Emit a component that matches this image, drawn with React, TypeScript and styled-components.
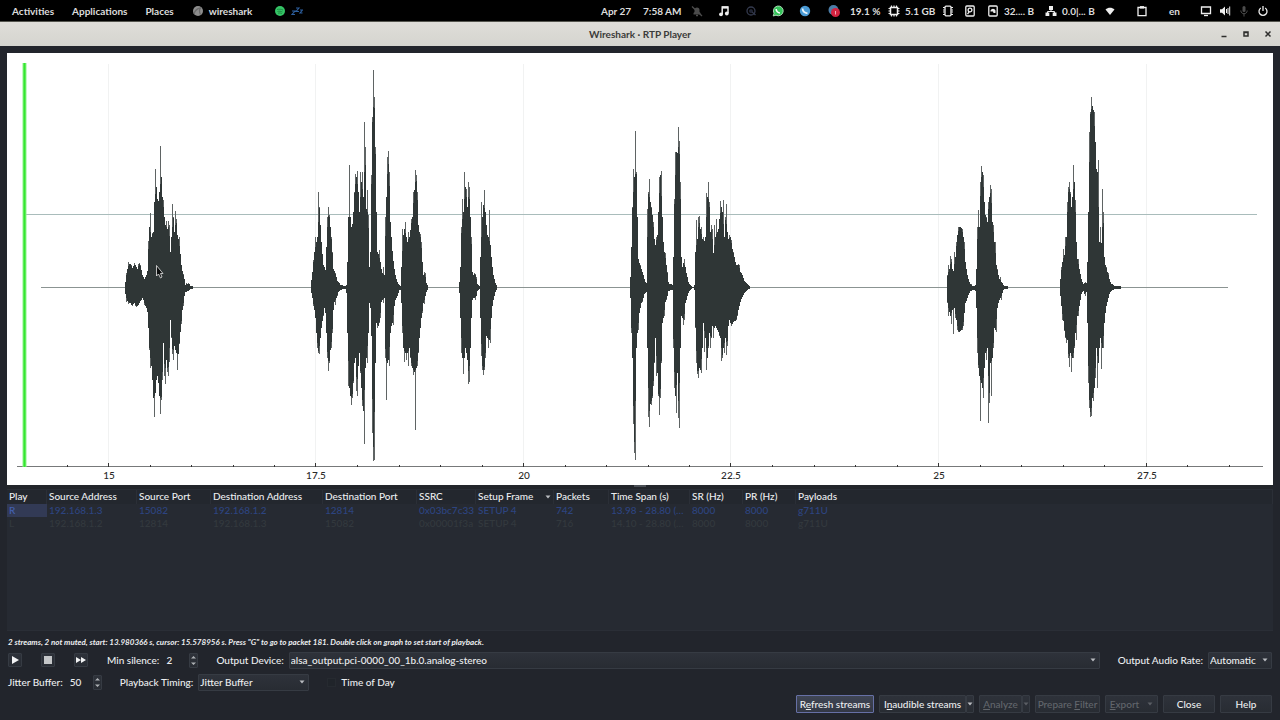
import React from 'react';
import styled, { createGlobalStyle, css } from 'styled-components';

const GlobalStyle = createGlobalStyle`
  * { box-sizing: border-box; }
  body { margin: 0; background: #22252c; }
  button, input, select { font: inherit; color: inherit; margin: 0; }
`;

const uiFont = '"Lato", "Noto Sans", sans-serif';

/* ---------- desktop shell ---------- */

const Desktop = styled.div`
  display: flex;
  flex-direction: column;
  min-height: 100vh;
  background: #22252c;
  color: #eceef0;
  font: 500 10px/14px ${uiFont};
`;

const TopBar = styled.header`
  display: flex;
  align-items: center;
  height: 22px;
  padding: 0 10px 0 12px;
  background: #000;
  border-bottom: 1px solid #55554f;
  color: #dcdcdc;
  font: 700 10px/14px ${uiFont};
  white-space: nowrap;
`;

const MenuButton = styled.button<{ $wide?: boolean }>`
  display: flex;
  align-items: center;
  gap: 5px;
  padding: 0;
  margin-right: ${p => (p.$wide ? 22 : 18)}px;
  border: 0;
  background: none;
`;

const Tray = styled.div`
  display: flex;
  align-items: center;
  margin-left: auto;
`;

const TrayText = styled.span<{ $w: number; $gap?: number }>`
  width: ${p => p.$w}px;
  margin-left: ${p => p.$gap ?? 4}px;
`;

const TrayIcon = styled.span<{ $gap?: number; $dim?: boolean }>`
  display: flex;
  justify-content: center;
  width: 14px;
  margin-left: ${p => p.$gap ?? 5}px;
  color: ${p => (p.$dim ? '#4c4c4c' : '#eeeeee')};
`;

const TitleBar = styled.div`
  display: grid;
  grid-template-columns: 1fr auto 1fr;
  align-items: center;
  height: 24px;
  padding: 0 6px;
  background: linear-gradient(#dfddd9, #d5d5cf);
  color: #3b3b39;
`;

const Title = styled.h1`
  margin: 0;
  grid-column: 2;
  font: 700 10px/14px ${uiFont};
`;

const WindowButtons = styled.div`
  display: flex;
  justify-content: flex-end;
  gap: 10px;
  button {
    display: flex;
    padding: 0;
    border: 0;
    background: none;
  }
`;

/* ---------- RTP player window ---------- */

const Player = styled.main`
  display: flex;
  flex: 1;
  flex-direction: column;
  padding: 7px;
`;

const Graph = styled.svg`
  display: block;
  width: 100%;
  height: auto;
  background: #fff;
`;

const Splitter = styled.div`
  display: flex;
  justify-content: center;
  height: 4px;
  background: #23262b;
  &::after {
    content: '';
    width: 12px;
    height: 2px;
    background: #4b5056;
  }
`;

const StreamList = styled.div`
  flex: 1;
  min-height: 140px;
  border: solid #2a2e36;
  border-width: 1px 0;
  background: #262a32;
`;

const StreamTable = styled.table`
  width: 100%;
  table-layout: fixed;
  border-collapse: collapse;
  th, td {
    height: 13px;
    padding: 0 0 0 2px;
    line-height: 13px;
    text-align: left;
    white-space: nowrap;
  }
  th {
    height: 14px;
    vertical-align: top;
    font-weight: 500;
    background: #23272e;
    box-shadow: inset -1px 0 #2b2f37;
  }
  th svg { float: right; margin: 5px 3px 0 0; }
`;

const StreamRow = styled.tr<{ $faded?: boolean }>`
  color: ${p => (p.$faded ? '#33393e' : '#2d4480')};
  td:first-child {
    background: ${p => (p.$faded ? 'none' : '#323a55')};
    color: ${p => (p.$faded ? '#33393e' : '#4360b0')};
  }
`;

const Hint = styled.p`
  margin: 4px 0 0;
  padding-left: 1px;
  font: italic 700 8px/14px ${uiFont};
`;

const ControlRow = styled.div`
  display: flex;
  align-items: center;
  height: 22px;
  padding: 0 1px;
`;

const Transport = styled.div`
  display: flex;
  gap: 19px;
  margin-right: 19px;
`;

const raised = css`
  border: 1px solid #363b43;
  border-radius: 1px;
  background: linear-gradient(#2e323a, #282c33);
`;

const IconButton = styled.button`
  display: flex;
  align-items: center;
  justify-content: center;
  width: 14px;
  height: 14px;
  padding: 0;
  ${raised}
`;

const Field = styled.label<{ $gap?: number; $grow?: boolean }>`
  display: flex;
  align-items: center;
  gap: 5px;
  flex: ${p => (p.$grow ? 1 : 'none')};
  margin-left: ${p => p.$gap ?? 0}px;
`;

const SpinBox = styled.span`
  display: flex;
  align-items: center;
  width: 34px;
  height: 16px;
  input {
    flex: 1;
    width: 0;
    padding: 0 0 0 2px;
    border: 0;
    background: none;
    appearance: textfield;
    outline: 0;
  }
  input::-webkit-inner-spin-button,
  input::-webkit-outer-spin-button {
    margin: 0;
    appearance: none;
  }
`;

const SpinArrows = styled.span`
  display: flex;
  align-items: center;
  justify-content: center;
  width: 9px;
  height: 15px;
  ${raised}
`;

const SelectBox = styled.span<{ $w?: number }>`
  display: grid;
  flex: ${p => (p.$w ? 'none' : 1)};
  width: ${p => (p.$w ? `${p.$w}px` : 'auto')};
  align-items: center;
  select {
    grid-area: 1 / 1;
    width: 100%;
    height: 17px;
    padding: 0 12px 0 1px;
    appearance: none;
    ${raised}
  }
  svg {
    grid-area: 1 / 1;
    justify-self: end;
    margin-right: 4px;
    pointer-events: none;
  }
`;

const CheckBox = styled.input`
  width: 9px;
  height: 9px;
  appearance: none;
  border: 1px solid #262a30;
  background: #20242a;
`;

const ButtonRow = styled.div`
  display: flex;
  justify-content: flex-end;
  gap: 5px;
  margin-top: 2px;
  padding-right: 1px;
`;

const PushButton = styled.button<{ $w: number; $focused?: boolean }>`
  display: flex;
  align-items: center;
  justify-content: center;
  gap: 8px;
  width: ${p => p.$w}px;
  height: 18px;
  padding: 0;
  white-space: nowrap;
  ${raised}
  ${p => p.$focused && css`
    border-color: #6670a6;
    background: linear-gradient(#3f4554, #333845);
  `}
  &:disabled { color: #62666c; }
`;

const SplitButton = styled.div`
  display: flex;
`;

/* ---------- waveform ---------- */

type Burst = { x: number; up: number[]; down: number[] };

const BASE = 287;

const bursts: Burst[] = [
  {
    x: 125,
    up: [5,14,18,25,23,23,22,19,21,24,22,20,18,23,24,22,17,12,10,8,10,12,16,46,60,74,50,54,55,85,118,100,88,86,95,141,110,90,87,70,62,66,58,66,62,35,50,83,70,55,76,68,52,48,50,33,22,16,13,8,2,4,3,4,3,1,1,1],
    down: [6,14,13,16,15,15,17,18,16,15,18,19,18,17,15,13,12,10,12,17,18,20,24,40,62,80,78,92,110,129,105,92,88,95,108,126,112,92,55,88,96,72,84,88,74,32,50,66,72,58,62,65,82,66,56,44,36,22,18,8,4,4,3,3,2,1,1,1],
  },
  {
    x: 311,
    up: [7,15,27,35,50,45,50,95,80,62,45,33,22,20,17,40,70,80,72,60,50,35,18,16,14,10,6,5,4,2,2,2,1,1,1,2,25,70,122,70,60,63,75,95,113,110,116,95,75,115,105,115,90,165,140,78,97,72,20,35,112,170,217,190,140,75,35,33,37,25,18,14,20,12,70,90,130,136,115,65,50,36,26,18,12,8,5,3,2,1,20,58,52,58,65,50,45,55,50,57,68,70,95,97,117,112,95,62,55,53,45,25,12,15,14,4,2],
    down: [5,10,18,22,30,45,60,65,66,50,40,33,28,20,25,45,70,83,75,62,60,45,22,14,17,10,8,4,3,2,2,1,1,1,1,5,45,98,100,108,117,110,95,75,70,103,108,78,65,85,100,118,123,156,80,70,75,45,15,20,48,145,173,172,75,35,40,38,35,30,14,12,15,10,70,112,75,72,78,45,38,35,37,18,12,10,8,5,2,2,15,45,60,74,65,72,65,78,60,70,78,80,87,84,142,80,78,65,50,40,30,25,15,16,8,4,2],
  },
  {
    x: 459,
    up: [5,20,60,88,75,115,100,98,80,105,100,70,50,15,12,14,13,10,3,2,1,30,85,70,82,97,75,62,52,50,77,42,30,20,12,8,4,2],
    down: [5,30,65,70,86,70,60,65,72,96,94,60,30,12,10,10,12,8,3,2,1,30,68,82,87,82,70,48,50,60,52,55,30,18,12,8,4,2],
  },
  {
    x: 630,
    up: [10,40,80,118,110,156,115,70,28,24,22,18,15,12,8,5,4,78,95,108,85,80,72,65,48,42,50,52,75,110,112,116,70,45,35,34,22,15,5,3,3,3,2,30,88,135,135,134,160,146,105,30,20,24,28,20,14,10,5,3,2,1,0,0,2,35,67,48,70,71,58,60,48,50,46,50,94,90,105,85,55,62,58,34,62,50,68,55,58,68,86,80,75,87,50,70,83,55,48,52,50,47,38,35,30,25,22,22,23,22,15,14,12,9,6,5,4,3,2,1],
    down: [10,45,70,136,165,172,60,45,42,25,20,15,14,10,6,5,4,60,129,139,116,117,110,98,75,50,88,85,108,127,110,75,35,30,28,14,12,8,3,3,2,2,2,60,100,108,125,85,130,140,60,28,30,37,32,15,12,8,5,3,2,1,0,0,2,40,75,86,90,80,82,85,60,35,64,50,82,70,60,45,60,50,38,50,40,38,40,42,44,48,50,73,70,60,65,50,67,58,38,32,35,38,36,34,33,33,32,28,22,18,14,11,9,7,5,4,3,2,1,1],
  },
  {
    x: 947,
    up: [12,22,18,31,28,18,16,35,30,45,52,60,60,60,59,58,50,45,25,18,12,8,5,3,3,1,1,1,2,18,60,77,60,105,121,115,112,85,72,70,65,85,90,102,98,65,62,45,45,22,18,12,8,10,5,4,2,1,1,1,1],
    down: [15,28,24,28,36,22,46,20,30,32,42,44,44,43,42,42,38,25,15,13,10,7,5,3,3,2,2,2,3,20,65,80,88,133,95,100,110,80,65,72,60,135,115,75,108,70,60,40,42,44,20,15,12,10,12,5,2,1,1,1,1],
  },
  {
    x: 1060,
    up: [8,20,25,38,32,50,50,85,100,105,95,80,90,122,105,87,45,28,28,18,13,8,5,3,4,5,4,25,75,155,175,190,181,177,175,145,118,115,127,45,60,44,98,75,30,22,20,15,14,8,5,3,3,2,1,1,1,1,1,1,1],
    down: [8,18,32,33,43,50,55,52,70,79,65,84,70,70,60,45,52,28,28,18,12,6,4,3,6,8,4,35,95,120,129,128,110,113,100,90,60,100,75,60,50,81,60,60,35,25,18,14,10,6,4,3,2,2,1,1,1,1,1,1,1],
  },
];

/* Limits every sample to the mean of its neighbours, so peaks stay out of the dark body. */
const body = (s: number[]) =>
  s.map((v, i) => Math.min(v, Math.round(((s[i - 1] ?? 0) + (s[i + 1] ?? 0)) / 2)));

const envelope = (x: number, up: number[], down: number[]) => {
  const top = up.map((v, i) => `L${x + i} ${BASE - v}H${x + i + 1}`).join('');
  const bottom = down
    .map((v, i) => `L${x + i + 1} ${BASE + 1 + v}H${x + i}`)
    .reverse()
    .join('');
  return `M${x} ${BASE}${top}${bottom}Z`;
};

const majorTicks = [
  { x: 109, label: '15' },
  { x: 316, label: '17.5' },
  { x: 524, label: '20' },
  { x: 731, label: '22.5' },
  { x: 939, label: '25' },
  { x: 1147, label: '27.5' },
];
const minorTicks = Array.from({ length: 30 }, (_, i) => 25.5 + i * 41.5).filter(
  x => x < 1258 && !majorTicks.some(t => Math.abs(t.x - x) < 4),
);

const Waveform = () => (
  <Graph viewBox="7 53 1266 432" role="img" aria-label="RTP stream waveform">
    {majorTicks.map(t => (
      <path key={t.x} d={`M${t.x - 0.5} 64V463`} stroke="#f1f2f2" />
    ))}
    <path d="M25 214.500H1257" stroke="#a9bcbb" />
    <path d="M41 287.500H1228" stroke="#8b9492" />
    {bursts.map(b => (
      <g key={b.x}>
        <path d={envelope(b.x, b.up, b.down)} fill="#5f6464" />
        <path d={envelope(b.x, body(b.up), body(b.down))} fill="#2f3636" />
      </g>
    ))}
    <path d="M17 466.500H1263" stroke="#77797a" />
    {minorTicks.map(x => (
      <path key={x} d={`M${Math.floor(x) + 0.5} 465V467`} stroke="#333" />
    ))}
    {majorTicks.map(t => (
      <g key={t.label}>
        <path d={`M${t.x - 0.5} 463V467`} stroke="#333" />
        <text x={t.x} y="479" textAnchor="middle" fontSize="10" fill="#2a2a2a">
          {t.label}
        </text>
      </g>
    ))}
    <path d="M24.500 63V467" stroke="#8df38a" strokeWidth="4" />
    <path d="M24.500 63V467" stroke="#35e62f" strokeWidth="2" />
    <path
      d="M156.500 265.500V276L158.500 274L160.500 278L162 277L160.500 273.500H163Z"
      fill="#0b0d0d"
      stroke="#e8e8e8"
      strokeWidth="0.8"
    />
  </Graph>
);

/* ---------- small drawings ---------- */

const Caret = ({ dim }: { dim?: boolean }) => (
  <svg width="6" height="4" viewBox="0 0 6 4">
    <path d="M0.500 0.500H5.500L3 3.500Z" fill={dim ? '#5a5e64' : '#b9bcc0'} />
  </svg>
);

const UpDown = () => (
  <svg width="7" height="11" viewBox="0 0 7 11">
    <path d="M1 3.500L3.500 1L6 3.500ZM1 7.500L3.500 10L6 7.500Z" fill="#aeb1b5" />
  </svg>
);

const Svg = ({ children }: { children: React.ReactNode }) => (
  <svg width="12" height="12" viewBox="0 0 12 12" fill="none" stroke="currentColor" strokeWidth="1.3">
    {children}
  </svg>
);

const icons = {
  shark: (
    <Svg>
      <circle cx="6" cy="6" r="5" fill="#8d8d8d" stroke="none" />
      <path d="M2 9C3 5 5 3.500 8.500 3C7 5 7.200 7 8.500 9.500" stroke="#6b6b6b" />
    </Svg>
  ),
  spotify: (
    <Svg>
      <circle cx="6" cy="6" r="5" fill="#35c566" stroke="none" />
      <path d="M3 4.500C5 4 7.500 4.200 9 5M3.500 6.500C5 6 7 6.200 8.500 7M4 8.200C5.500 7.800 6.800 8 8 8.500" stroke="#1d8742" strokeWidth="0.9" />
    </Svg>
  ),
  sleep: (
    <Svg>
      <path d="M1 6H4L1 9.500H4M5 3H8L5 6.500H8M9 5H11.500L9 8H11.500" stroke="#2d5f9e" strokeWidth="1.1" />
    </Svg>
  ),
  bell: (
    <Svg>
      <path d="M2.500 9.500V8L3.500 7V5A2.500 2.500 0 0 1 8.500 5V7L9.500 8V9.500Z" fill="currentColor" stroke="none" />
      <path d="M5 10.500H7M1 1.500L11 11" />
    </Svg>
  ),
  music: (
    <Svg>
      <path d="M4.200 9V2H10V8" strokeWidth="1.500" />
      <path d="M4 2.500H10" strokeWidth="2.200" />
      <circle cx="3" cy="9.300" r="1.900" fill="currentColor" stroke="none" />
      <circle cx="8.800" cy="8.500" r="1.900" fill="currentColor" stroke="none" />
    </Svg>
  ),
  search: (
    <Svg>
      <circle cx="6" cy="6" r="4" stroke="#343a4e" />
      <path d="M7 7L10.500 10" stroke="#343a4e" />
      <circle cx="6" cy="6" r="1.200" stroke="#2a3043" />
    </Svg>
  ),
  whatsapp: (
    <Svg>
      <path d="M1.200 11L2 8.200A4.900 4.900 0 1 1 4 10.200Z" fill="#35c35a" stroke="#c9eccf" strokeWidth="0.8" />
      <path d="M4.200 4C4 6 6 8 8 8" stroke="#fff" strokeWidth="1.500" />
    </Svg>
  ),
  phone: (
    <Svg>
      <circle cx="6" cy="6" r="5.200" fill="#4a9ad4" stroke="none" />
      <path d="M3.500 3.500C3.800 6.500 5.500 8 8.500 8.300" stroke="#eaf4fb" strokeWidth="1.800" />
    </Svg>
  ),
  alert: (
    <svg width="14" height="14" viewBox="0 0 14 14">
      <circle cx="6.500" cy="6" r="5" fill="#4c7ea8" />
      <circle cx="8.500" cy="8.500" r="4.500" fill="#d32340" />
      <path d="M8.500 7V10.500" stroke="#f3aab5" />
    </svg>
  ),
  cpu: (
    <Svg>
      <rect x="2.500" y="2.500" width="7" height="7" strokeWidth="1.500" />
      <path d="M3.500 0.500V2M6 0.500V2M8.500 0.500V2M3.500 10V11.500M6 10V11.500M8.500 10V11.500M0.500 3.500H2M0.500 6H2M0.500 8.500H2M10 3.500H11.500M10 6H11.500M10 8.500H11.500" strokeWidth="1.200" />
    </Svg>
  ),
  memory: (
    <Svg>
      <rect x="3" y="1.200" width="6" height="9.600" rx="1" />
      <path d="M1 2.500H3M1 5H2.500M1 7H2.500M1 9.500H3M9 2.500H11M9.500 5H11M9.500 7H11M9 9.500H11" strokeWidth="1.200" />
    </Svg>
  ),
  disk: (
    <Svg>
      <rect x="1.800" y="1" width="8.400" height="10" rx="1" />
      <circle cx="6" cy="5" r="1.900" />
      <path d="M3.500 9.200L5 7" />
    </Svg>
  ),
  gauge: (
    <Svg>
      <rect x="1.800" y="1" width="8.400" height="10" rx="1" />
      <path d="M3.500 5.500A2.700 2.700 0 0 1 8.500 5.500V8H6.500L6 6.500L3.500 6.500" fill="currentColor" stroke="none" />
    </Svg>
  ),
  network: (
    <Svg>
      <path d="M4 1H8V5H4ZM0.500 7.500H4.300V11H0.500ZM7.700 7.500H11.500V11H7.700Z" fill="currentColor" stroke="none" />
      <path d="M6 4V6.500M2.500 8V6.500H9.500V8" strokeWidth="1" />
    </Svg>
  ),
  wifi: (
    <Svg>
      <path d="M1.500 4.500C4 2 8 2 10.500 4.500L6 10Z" fill="currentColor" stroke="none" />
    </Svg>
  ),
  clipboard: (
    <Svg>
      <path d="M2 2.500H10V10.700H2Z" />
      <path d="M4 2.300H8" strokeWidth="2.400" />
    </Svg>
  ),
  screen: (
    <Svg>
      <path d="M1.500 2H10.500V8.500H1.500Z" />
      <path d="M4 10.500H8" />
    </Svg>
  ),
  volume: (
    <Svg>
      <path d="M1 4.300H3L6 1.500V10.500L3 7.700H1Z" fill="currentColor" stroke="none" />
      <path d="M7.500 4V8M9 3V9M10.700 1.500V10.500" strokeWidth="1" />
    </Svg>
  ),
  mic: (
    <Svg>
      <rect x="4.500" y="1" width="3" height="6" rx="1.500" fill="currentColor" stroke="none" />
      <path d="M2.800 5.500C2.800 9.800 9.200 9.800 9.200 5.500M6 9V11.500" strokeWidth="1" />
    </Svg>
  ),
  power: (
    <Svg>
      <path d="M3.800 3A4 4 0 1 0 8.200 3M6 1V6" />
    </Svg>
  ),
};

/* ---------- page ---------- */

const columns = [
  { name: 'Play', w: 40 },
  { name: 'Source Address', w: 90 },
  { name: 'Source Port', w: 74 },
  { name: 'Destination Address', w: 112 },
  { name: 'Destination Port', w: 94 },
  { name: 'SSRC', w: 59 },
  { name: 'Setup Frame', w: 78, sorted: true },
  { name: 'Packets', w: 55 },
  { name: 'Time Span (s)', w: 81 },
  { name: 'SR (Hz)', w: 53 },
  { name: 'PR (Hz)', w: 53 },
  { name: 'Payloads' },
];

const streams = [
  ['R', '192.168.1.3', '15082', '192.168.1.2', '12814', '0x03bc7c33', 'SETUP 4', '742', '13.98 - 28.80 (…', '8000', '8000', 'g711U'],
  ['L', '192.168.1.2', '12814', '192.168.1.3', '15082', '0x00001f3a', 'SETUP 4', '716', '14.10 - 28.80 (…', '8000', '8000', 'g711U'],
];

export default function App() {
  return (
    <Desktop>
      <GlobalStyle />
      <TopBar>
        <MenuButton>Activities</MenuButton>
        <MenuButton>Applications</MenuButton>
        <MenuButton>Places</MenuButton>
        <MenuButton $wide>{icons.shark}wireshark</MenuButton>
        <MenuButton aria-label="Background apps">{icons.spotify}{icons.sleep}</MenuButton>
        <Tray>
          <TrayText $w={30}>Apr 27</TrayText>
          <TrayText $w={39} $gap={12}>7:58 AM</TrayText>
          <TrayIcon $gap={8} $dim>{icons.bell}</TrayIcon>
          <TrayIcon $gap={13}>{icons.music}</TrayIcon>
          <TrayIcon $gap={13}>{icons.search}</TrayIcon>
          <TrayIcon $gap={13}>{icons.whatsapp}</TrayIcon>
          <TrayIcon $gap={13}>{icons.phone}</TrayIcon>
          <TrayIcon $gap={15}>{icons.alert}</TrayIcon>
          <TrayText $w={32} $gap={9}>19.1 %</TrayText>
          <TrayIcon>{icons.cpu}</TrayIcon>
          <TrayText $w={32}>5.1 GB</TrayText>
          <TrayIcon $gap={4}>{icons.memory}</TrayIcon>
          <TrayIcon $gap={8}>{icons.disk}</TrayIcon>
          <TrayIcon $gap={9}>{icons.gauge}</TrayIcon>
          <TrayText $w={36}>32.... B</TrayText>
          <TrayIcon $gap={4}>{icons.network}</TrayIcon>
          <TrayText $w={36}>0.0|... B</TrayText>
          <TrayIcon>{icons.wifi}</TrayIcon>
          <TrayIcon $gap={18}>{icons.clipboard}</TrayIcon>
          <TrayText $w={12} $gap={20}>en</TrayText>
          <TrayIcon $gap={18}>{icons.screen}</TrayIcon>
          <TrayIcon>{icons.volume}</TrayIcon>
          <TrayIcon $dim>{icons.mic}</TrayIcon>
          <TrayIcon>{icons.power}</TrayIcon>
        </Tray>
      </TopBar>

      <TitleBar>
        <Title>Wireshark · RTP Player</Title>
        <WindowButtons>
          <button aria-label="Minimize"><Svg><path d="M3.500 8.500H8.500" stroke="#2f2f2d" strokeWidth="1.500" /></Svg></button>
          <button aria-label="Maximize"><Svg><path d="M4 4H8V8H4ZM4 4.500H8" stroke="#2f2f2d" strokeWidth="1.500" /></Svg></button>
          <button aria-label="Close window"><Svg><path d="M3.500 3.500L8.500 8.500M8.500 3.500L3.500 8.500" stroke="#2f2f2d" strokeWidth="1.500" /></Svg></button>
        </WindowButtons>
      </TitleBar>

      <Player>
        <Waveform />
        <Splitter />
        <StreamList>
          <StreamTable>
            <colgroup>
              {columns.map(c => <col key={c.name} width={c.w} />)}
            </colgroup>
            <thead>
              <tr>
                {columns.map(c => (
                  <th key={c.name}>{c.name}{c.sorted && <Caret />}</th>
                ))}
              </tr>
            </thead>
            <tbody>
              {streams.map((cells, r) => (
                <StreamRow key={r} $faded={r > 0}>
                  {cells.map((cell, i) => <td key={i}>{cell}</td>)}
                </StreamRow>
              ))}
            </tbody>
          </StreamTable>
        </StreamList>

        <Hint>
          2 streams, 2 not muted, start: 13.980366 s, cursor: 15.578956 s. Press "G" to go to packet 181. Double click on graph to set start of playback.
        </Hint>

        <ControlRow>
          <Transport>
            <IconButton aria-label="Play">
              <svg width="8" height="8" viewBox="0 0 8 8"><path d="M1 0L8 4L1 8Z" fill="#f2f3f4" /></svg>
            </IconButton>
            <IconButton aria-label="Stop">
              <svg width="8" height="8" viewBox="0 0 8 8"><path d="M0 0H8V8H0Z" fill="#c4c6c8" /></svg>
            </IconButton>
            <IconButton aria-label="Skip silence">
              <svg width="10" height="6" viewBox="0 0 10 6"><path d="M0 0L5 3L0 6ZM5 0L10 3L5 6Z" fill="#f2f3f4" /></svg>
            </IconButton>
          </Transport>
          <Field>
            Min silence:
            <SpinBox><input type="number" defaultValue={2} /><SpinArrows><UpDown /></SpinArrows></SpinBox>
          </Field>
          <Field $gap={18} $grow>
            Output Device:
            <SelectBox>
              <select><option>alsa_output.pci-0000_00_1b.0.analog-stereo</option></select>
              <Caret />
            </SelectBox>
          </Field>
          <Field $gap={18}>
            Output Audio Rate:
            <SelectBox $w={64}>
              <select><option>Automatic</option></select>
              <Caret />
            </SelectBox>
          </Field>
        </ControlRow>

        <ControlRow>
          <Field>
            Jitter Buffer:
            <SpinBox><input type="number" defaultValue={50} /><SpinArrows><UpDown /></SpinArrows></SpinBox>
          </Field>
          <Field $gap={18}>
            Playback Timing:
            <SelectBox $w={111}>
              <select><option>Jitter Buffer</option></select>
              <Caret />
            </SelectBox>
          </Field>
          <Field $gap={18}>
            <CheckBox type="checkbox" />
            Time of Day
          </Field>
        </ControlRow>

        <ButtonRow>
          <PushButton $w={78} $focused><span>R<u>e</u>fresh streams</span></PushButton>
          <SplitButton>
            <PushButton $w={87}><span>I<u>n</u>audible streams</span></PushButton>
            <PushButton $w={8} aria-label="Inaudible streams options"><Caret /></PushButton>
          </SplitButton>
          <SplitButton>
            <PushButton $w={43} disabled><span><u>A</u>nalyze</span></PushButton>
            <PushButton $w={8} disabled aria-label="Analyze options"><Caret dim /></PushButton>
          </SplitButton>
          <PushButton $w={65} disabled><span>Prepare <u>F</u>ilter</span></PushButton>
          <PushButton $w={53} disabled><span><u>E</u>xport</span><Caret dim /></PushButton>
          <PushButton $w={52}>Close</PushButton>
          <PushButton $w={52}>Help</PushButton>
        </ButtonRow>
      </Player>
    </Desktop>
  );
}
